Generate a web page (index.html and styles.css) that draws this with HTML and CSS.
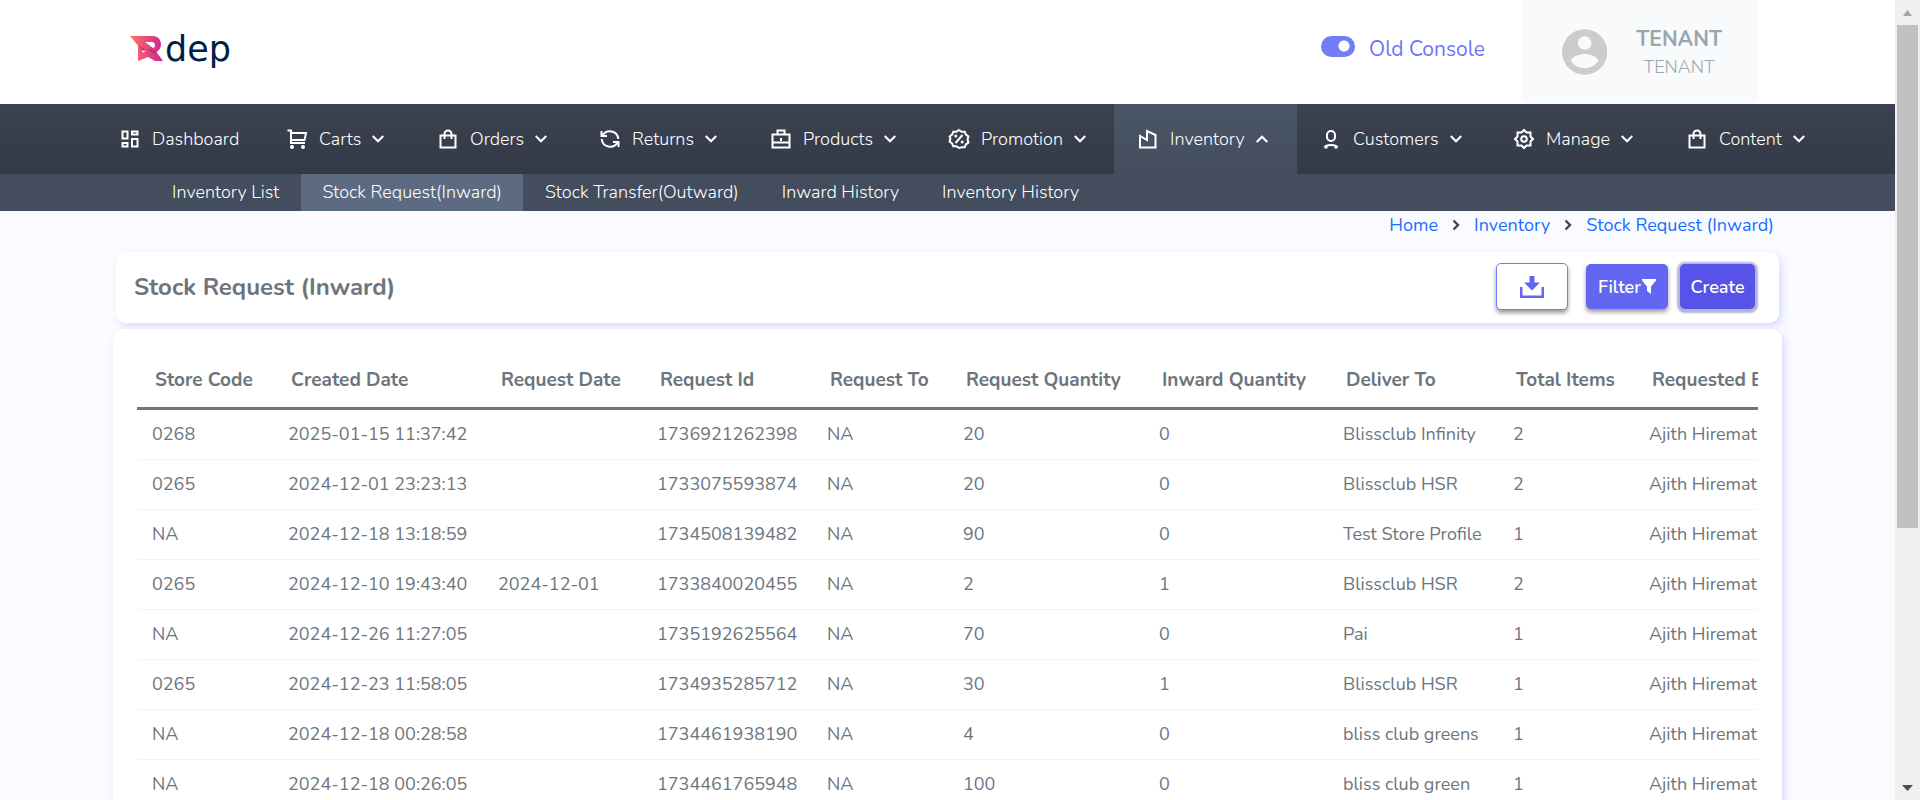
FILE: index.html
```html
<!DOCTYPE html>
<html lang="en">
<head>
<meta charset="utf-8">
<title>Stock Request (Inward)</title>
<link rel="stylesheet" href="styles.css">
</head>
<body>
<svg class="defs" aria-hidden="true">
  <symbol id="down" viewBox="0 0 12 12"><path d="M1.500 3.500 6 8l4.500-4.500" fill="none" stroke="currentColor" stroke-width="1.800"/></symbol>
  <symbol id="right" viewBox="0 0 12 12"><path d="M3.500 1.500 8 6l-4.500 4.500" fill="none" stroke="currentColor" stroke-width="2.400"/></symbol>
  <symbol id="bag" viewBox="0 0 24 24"><path d="M4.500 8.500h15v12h-15zM8.500 12V7a3.500 3.500 0 0 1 7 0v5"/></symbol>
</svg>
<div class="page">
  <header class="top">
    <a class="logo" href="#" aria-label="Rdep">
      <svg class="logo-mark" viewBox="0 0 33 25" aria-hidden="true">
        <defs><linearGradient id="g" x1="0" x2="1"><stop offset="0" stop-color="#ff7364"/><stop offset="1" stop-color="#cf2492"/></linearGradient></defs>
        <path fill="url(#g)" fill-rule="evenodd" d="M0 0h23c5 0 8 4 8 8.500 0 3.500-2 6-4.500 7.500L33 25h-8l-7-4L8 25V9.500zM15 6 23 12c1.500-.5 2-1.500 2-3s-1-3-3-3zM12.500 14v2.500l3-1z"/>
        <path fill="#9c2a68" opacity=".5" d="M8 9.500 13 15l1.500-2.500zM18 12l9 4-3 2-5-3z"/>
      </svg>
      <span class="logo-text">dep</span>
    </a>
    <div class="top-right">
      <label class="console"><input class="switch" type="checkbox" checked><span>Old Console</span></label>
      <div class="tenant">
        <svg class="avatar" viewBox="2 2 20 20" aria-hidden="true"><path fill="#ccc" d="M12 2a10 10 0 1 0 0 20 10 10 0 0 0 0-20zm0 3a3 3 0 1 1 0 6 3 3 0 0 1 0-6zm0 14.200a7.200 7.200 0 0 1-6-3.220c.03-1.990 4-3.080 6-3.080s5.970 1.090 6 3.080a7.200 7.200 0 0 1-6 3.220z"/></svg>
        <div class="tenant-text"><strong>TENANT</strong><span>TENANT</span></div>
      </div>
    </div>
  </header>

  <nav class="main-nav" aria-label="Main">
    <a href="#"><svg class="icon" viewBox="0 0 24 24"><path d="M4.500 4.500h5v7h-5zM14 4.500h5.500v3H14zM4.500 16h5v3.500h-5zM14 12h5.500v7.500H14z"/></svg>Dashboard</a>
    <a href="#"><svg class="icon" viewBox="0 0 24 24"><path d="M2.500 3.500h3.500v12.500h14M6 6h15l-1.500 7H6"/><circle class="dot" cx="7" cy="20" r="2"/><circle class="dot" cx="18" cy="20" r="2"/></svg>Carts<svg class="chev"><use href="#down"/></svg></a>
    <a href="#"><svg class="icon"><use href="#bag"/></svg>Orders<svg class="chev"><use href="#down"/></svg></a>
    <a href="#"><svg class="icon" viewBox="0 0 24 24"><path d="M4.500 8.500A8.500 8.500 0 0 1 20.300 12M3.700 12a8.500 8.500 0 0 0 15.800 3.500M3.500 4v5H9M15 15h5.500v5"/></svg>Returns<svg class="chev"><use href="#down"/></svg></a>
    <a href="#"><svg class="icon" viewBox="0 0 24 24"><path d="M3.500 7.500h17v13h-17zM8.500 7.500v-4h7v4M3.500 15.500h17M12 11v3"/></svg>Products<svg class="chev"><use href="#down"/></svg></a>
    <a href="#"><svg class="icon" viewBox="0 0 24 24"><path d="m12 3 2.600 1.800 3.100-.1 1.200 2.900 2.500 1.900-.8 3 .8 3-2.500 1.900-1.200 2.900-3.100-.1L12 21l-2.600-1.800-3.100.1-1.200-2.900L2.600 14.500l.8-3-.8-2L5.100 7.600l1.200-2.900 3.100.1zM15.500 8l-7 8"/><circle class="dot" cx="8.800" cy="9" r="1.500"/><circle class="dot" cx="15.200" cy="15" r="1.500"/></svg>Promotion<svg class="chev"><use href="#down"/></svg></a>
    <a class="active" href="#" aria-current="true"><svg class="icon" viewBox="0 0 24 24"><path d="M4 9v11.500h15.500V8L11 4v9z"/></svg>Inventory<svg class="chev up"><use href="#down"/></svg></a>
    <a href="#"><svg class="icon" viewBox="0 0 24 24"><rect x="8" y="4" width="8" height="10" rx="4"/><path d="M5.500 20.500C7 17 17 17 18.500 20.500M5.500 20.500h3M15.500 20.500h3"/></svg>Customers<svg class="chev"><use href="#down"/></svg></a>
    <a href="#"><svg class="icon" viewBox="0 0 24 24"><path d="m12 3 2.500 2.500H18.500v4L21 12l-2.500 2.500v4h-4L12 21l-2.500-2.500h-4v-4L3 12l2.500-2.500v-4h4z"/><circle cx="12" cy="12" r="2.800"/></svg>Manage<svg class="chev"><use href="#down"/></svg></a>
    <a href="#"><svg class="icon"><use href="#bag"/></svg>Content<svg class="chev"><use href="#down"/></svg></a>
  </nav>
  <nav class="sub-nav" aria-label="Inventory">
    <a href="#">Inventory List</a>
    <a class="active" href="#" aria-current="page">Stock Request(Inward)</a>
    <a href="#">Stock Transfer(Outward)</a>
    <a href="#">Inward History</a>
    <a href="#">Inventory History</a>
  </nav>

  <main class="content">
    <nav class="crumbs" aria-label="Breadcrumb">
      <a href="#">Home</a><svg class="sep"><use href="#right"/></svg><a href="#">Inventory</a><svg class="sep"><use href="#right"/></svg><a href="#">Stock Request (Inward)</a>
    </nav>
    <section class="title-card">
      <h1>Stock Request (Inward)</h1>
      <div class="actions">
        <button class="btn download" type="button" aria-label="Download"><svg viewBox="0 0 24 22" aria-hidden="true"><path fill="currentColor" d="M9.500 0h5v6.500H20l-8 8-8-8h5.500zM0 11h2.500v8.500h19V11H24v11H0z"/></svg></button>
        <button class="btn filter" type="button">Filter<svg viewBox="0 0 14 15" aria-hidden="true"><path fill="currentColor" d="M0 0h14v1.500L9 7.500V15l-4-3V7.500L0 1.500z"/></svg></button>
        <button class="btn create" type="button">Create</button>
      </div>
    </section>
    <section class="table-card">
      <div class="table-wrap">
        <table>
          <colgroup><col class="w-s"><col class="w-xl"><col class="w-m"><col class="w-l"><col class="w-s"><col class="w-q"><col class="w-i"><col class="w-l"><col class="w-s"><col class="w-l"></colgroup>
          <thead><tr><th>Store Code</th><th>Created Date</th><th>Request Date</th><th>Request Id</th><th>Request To</th><th>Request Quantity</th><th>Inward Quantity</th><th>Deliver To</th><th>Total Items</th><th>Requested By</th></tr></thead>
          <tbody>
            <tr><td>0268</td><td>2025-01-15 11:37:42</td><td></td><td>1736921262398</td><td>NA</td><td>20</td><td>0</td><td>Blissclub Infinity</td><td>2</td><td>Ajith Hiremath</td></tr>
            <tr><td>0265</td><td>2024-12-01 23:23:13</td><td></td><td>1733075593874</td><td>NA</td><td>20</td><td>0</td><td>Blissclub HSR</td><td>2</td><td>Ajith Hiremath</td></tr>
            <tr><td>NA</td><td>2024-12-18 13:18:59</td><td></td><td>1734508139482</td><td>NA</td><td>90</td><td>0</td><td>Test Store Profile</td><td>1</td><td>Ajith Hiremath</td></tr>
            <tr><td>0265</td><td>2024-12-10 19:43:40</td><td>2024-12-01</td><td>1733840020455</td><td>NA</td><td>2</td><td>1</td><td>Blissclub HSR</td><td>2</td><td>Ajith Hiremath</td></tr>
            <tr><td>NA</td><td>2024-12-26 11:27:05</td><td></td><td>1735192625564</td><td>NA</td><td>70</td><td>0</td><td>Pai</td><td>1</td><td>Ajith Hiremath</td></tr>
            <tr><td>0265</td><td>2024-12-23 11:58:05</td><td></td><td>1734935285712</td><td>NA</td><td>30</td><td>1</td><td>Blissclub HSR</td><td>1</td><td>Ajith Hiremath</td></tr>
            <tr><td>NA</td><td>2024-12-18 00:28:58</td><td></td><td>1734461938190</td><td>NA</td><td>4</td><td>0</td><td>bliss club greens</td><td>1</td><td>Ajith Hiremath</td></tr>
            <tr><td>NA</td><td>2024-12-18 00:26:05</td><td></td><td>1734461765948</td><td>NA</td><td>100</td><td>0</td><td>bliss club green</td><td>1</td><td>Ajith Hiremath</td></tr>
          </tbody>
        </table>
      </div>
    </section>
  </main>
</div>
<div class="scrollbar" aria-hidden="true">
  <svg class="arrow" viewBox="0 0 25 25"><path fill="#a3a3a3" d="m8 16 4.500-6 4.500 6z"/></svg>
  <div class="track"><div class="thumb"></div></div>
  <svg class="arrow" viewBox="0 0 25 25"><path fill="#505050" d="m7 10 5.500 6 5.500-6z"/></svg>
</div>
</body>
</html>
```
FILE: styles.css
```css
* { box-sizing: border-box; }
body {
  margin: 0;
  height: 100vh;
  display: flex;
  overflow: hidden;
  background: #fafbff;
  color: #6c757d;
  font: 18px/24px Nunito, "Open Sans", "Noto Sans", sans-serif;
}
a { color: inherit; text-decoration: none; }
.defs { display: none; }
.page { flex: 1; min-width: 0; overflow: hidden; display: flex; flex-direction: column; }

.top { display: flex; justify-content: space-between; height: 104px; flex: none; padding: 0 137px 0 130px; background: #fff; }
.logo { display: flex; align-items: flex-start; padding-top: 36px; gap: 2px; }
.logo-mark { width: 33px; height: 25px; }
.logo-text { font: 35px/34px "DejaVu Sans", sans-serif; color: #001f46; margin-top: -4px; }
.top-right { display: flex; gap: 36px; }
.console { display: flex; align-items: center; gap: 14px; padding-bottom: 6px; font-size: 21px; color: #6c76f5; }
.switch { appearance: none; width: 34px; height: 21px; margin: 0 0 5px; border-radius: 11px; background: radial-gradient(circle at 23px 10px, #fff 5px, #737df6 6px); }
.tenant { display: flex; align-items: center; gap: 29px; width: 237px; height: 103px; padding: 0 36px 0 41px; background: #f9fafc; border-radius: 5px; color: #98a6ad; }
.avatar { width: 46px; height: 46px; }
.tenant-text { display: flex; flex-direction: column; align-items: center; gap: 4px; padding-top: 2px; }
.tenant-text strong { font-size: 21px; font-weight: 700; }
.tenant-text span { font-weight: 300; }

.main-nav {
  display: grid;
  grid-template-columns: 167fr 151fr 162fr 171fr 178fr 189fr 183fr 193fr 173fr 170fr;
  flex: none;
  height: 70px;
  padding: 0 62px 0 96px;
  background: linear-gradient(#3c424f, #333a47);
  color: #fff;
  font-weight: 300;
}
.main-nav a { display: flex; align-items: center; padding-left: 22px; }
.main-nav .active { background: linear-gradient(#4a5565, #434d5d); }
.icon { width: 24px; height: 24px; margin-right: 10px; fill: none; stroke: #fff; stroke-width: 2; }
.icon .dot { fill: #fff; stroke: none; }
.chev { width: 14px; height: 14px; margin-left: 10px; }
.up { transform: rotate(180deg); }

.sub-nav { display: flex; gap: 1px; flex: none; height: 37px; padding-left: 151px; background: #434d5d; color: #fff; font-weight: 300; }
.sub-nav a { display: flex; align-items: center; padding: 0 21px 2px; }
.sub-nav .active { background: #5c6b81; }

.content { flex: 1; display: flex; flex-direction: column; padding: 0 113px; }
.crumbs { display: flex; justify-content: flex-end; align-items: center; gap: 12px; height: 28px; margin: 0 8px 13px; color: #1a6dff; }
.sep { width: 12px; height: 12px; color: #444; }

.title-card, .table-card { background: #fff; border-radius: 10px; box-shadow: 3px 4px 8px #d9dbfd; }
.title-card { display: flex; align-items: center; justify-content: space-between; height: 71px; flex: none; margin: 0 3px 6px; padding: 0 24px 2px 18px; }
h1 { margin: 0; font-size: 24px; font-weight: 700; line-height: 32px; }
.actions { display: flex; align-items: center; }
.btn { display: flex; align-items: center; justify-content: center; height: 45px; padding: 0; border: 0; border-radius: 5px; color: #fff; background: #6366f1; font: 600 18px/24px Nunito, "Open Sans", "Noto Sans", sans-serif; box-shadow: 0 3px 4px #999; }
.download { width: 72px; height: 47px; margin-right: 18px; background: #fff; border: 1px solid #727cf5; color: #6366f1; }
.download svg { width: 24px; height: 22px; }
.filter { width: 82px; margin-right: 12px; gap: 1px; }
.filter svg { width: 14px; height: 15px; }
.create { width: 75px; background: #5753e8; box-shadow: 0 1px 2px 3px #b3b3d6; }

.table-card { flex: 1; padding: 24px 24px 0; }
.table-wrap { overflow: hidden; }
table { width: 1667px; border-collapse: separate; border-spacing: 0; table-layout: fixed; white-space: nowrap; }
th, td { text-align: left; }
th { height: 57px; padding: 0 0 0 18px; font-size: 19px; font-weight: 700; border-bottom: 3px solid #6c757d; }
td { height: 50px; padding: 0 0 1px 15px; border-bottom: 1px solid #f3f4f5; }
.w-s { width: 136px; }
.w-m { width: 159px; }
.w-l { width: 170px; }
.w-i { width: 184px; }
.w-q { width: 196px; }
.w-xl { width: 210px; }

.scrollbar { display: flex; flex-direction: column; flex: none; width: 25px; background: #f0f0f0; }
.arrow { width: 25px; height: 25px; }
.track { flex: 1; padding: 0 2px; }
.thumb { height: 67%; background: #c1c1c1; }
```
